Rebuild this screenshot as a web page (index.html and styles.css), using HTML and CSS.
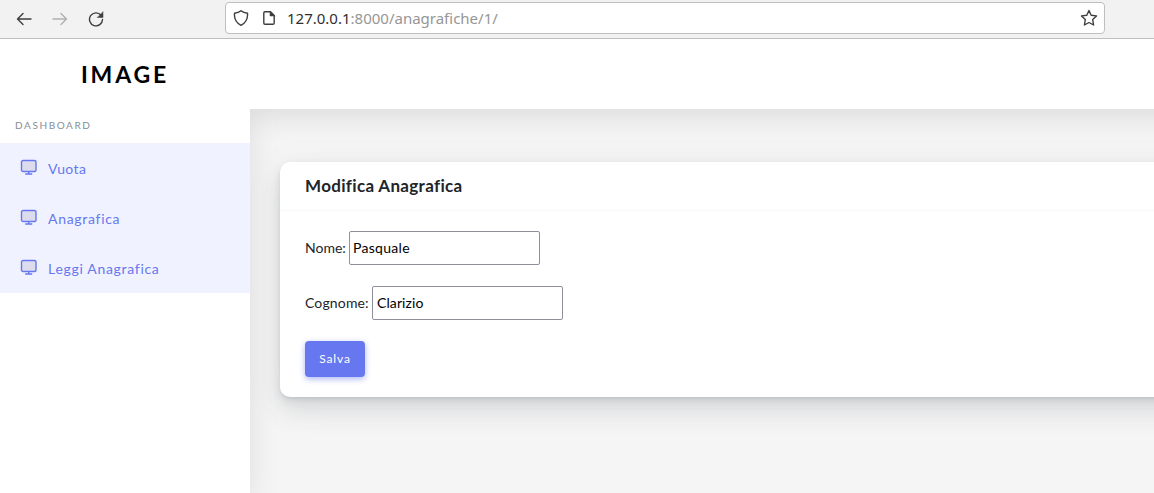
FILE: index.html
```html
<!DOCTYPE html>
<html lang="it">
<head>
<meta charset="utf-8">
<title>Modifica Anagrafica</title>
<link rel="stylesheet" href="styles.css">
</head>
<body>
<svg class="defs" width="0" height="0">
  <symbol id="monitor" viewBox="0 0 18 18">
    <rect x="1.5" y="1.5" width="14.500" height="11" rx="1.5" fill="#dcdcec" stroke="#6777ef" stroke-width="1.4"/>
    <path d="M8.750 12.500v2.500M5.200 15h7" fill="none" stroke="#6777ef" stroke-width="1.4"/>
  </symbol>
</svg>
<header class="browser">
  <div class="controls">
    <svg width="16" height="16" viewBox="0 0 16 16"><path d="M15 8H1.5M7 2.5L1.5 8L7 13.5"/></svg>
    <svg class="off" width="16" height="16" viewBox="0 0 16 16"><path d="M1 8h13.5M9 2.5L14.5 8L9 13.5"/></svg>
    <svg width="16" height="16" viewBox="0 0 16 16"><path d="M13 4.2A6.5 6.5 0 1 0 14.5 8.5"/><path class="solid" d="M15 1v5.5H9.5z"/></svg>
  </div>
  <div class="address">
    <svg width="16" height="18" viewBox="0 0 16 18"><path d="M8 1.7C6.2 3.2 4 3.9 1.5 4.2C1 9.500 3.500 14 8 16.300C12.500 14 15 9.500 14.500 4.200C12 3.900 9.800 3.200 8 1.700z"/></svg>
    <svg class="page" width="14" height="16" viewBox="0 0 14 16"><path d="M8.500 1.700H3A1.200 1.200 0 0 0 1.800 2.900V13A1.200 1.200 0 0 0 3 14.200H11A1.200 1.200 0 0 0 12.200 13V5.500z"/><path class="solid" d="M8 1.500V6h4.800z"/></svg>
    <span class="url"><b>127.0.0.1</b>:8000/anagrafiche/1/</span>
    <svg class="star" width="18" height="18" viewBox="0 0 18 18"><path d="M9 1.500L11.200 6.200L16.500 6.900L12.700 10.600L13.600 16L9 13.500L4.400 16L5.300 10.600L1.500 6.900L6.800 6.200z"/></svg>
  </div>
</header>
<div class="app">
  <aside class="sidebar">
    <div class="brand">IMAGE</div>
    <div class="section">DASHBOARD</div>
    <nav class="menu">
      <a class="item"><svg width="18" height="18"><use href="#monitor"/></svg><span class="short">Vuota</span></a>
      <a class="item"><svg width="18" height="18"><use href="#monitor"/></svg><span>Anagrafica</span></a>
      <a class="item"><svg width="18" height="18"><use href="#monitor"/></svg><span>Leggi Anagrafica</span></a>
    </nav>
  </aside>
  <main class="main">
    <div class="navbar"></div>
    <section class="card">
      <h4 class="title">Modifica Anagrafica</h4>
      <form class="form">
        <div class="field"><label for="nome">Nome:</label><input id="nome" value="Pasquale"></div>
        <div class="field"><label class="wide" for="cognome">Cognome:</label><input id="cognome" value="Clarizio"></div>
        <button class="save" type="button">Salva</button>
      </form>
    </section>
  </main>
</div>
</body>
</html>
```
FILE: styles.css
```css
* { box-sizing: border-box; }
body {
  margin: 0;
  height: 493px;
  overflow: hidden;
  display: flex;
  flex-direction: column;
  background: #f5f5f5;
  font: 14px/20px Lato, "Open Sans", sans-serif;
  color: #212529;
}
.defs { position: absolute; }
.browser {
  flex: none;
  height: 39px;
  display: flex;
  background: #f2f2f2;
  border-bottom: 1px solid #bebebe;
}
.browser svg { flex: none; fill: none; stroke: #3e3e3e; stroke-width: 1.4; stroke-linejoin: round; stroke-linecap: round; }
.browser .solid { fill: #3e3e3e; stroke-width: .5; }
.browser .off { stroke: #b0b0b0; }
.controls { width: 225px; padding: 11px 0 0 16px; display: flex; gap: 20px; }
.address {
  width: 880px;
  height: 32px;
  margin-top: 2px;
  padding: 0 6px 0 7px;
  display: flex;
  align-items: center;
  background: #fff;
  border: 1px solid #bfbfbf;
  border-radius: 4px;
}
.page { margin-left: 13px; }
.url { margin-left: 11px; font: 15px/20px "Noto Sans", sans-serif; color: #969696; }
.url b { font-weight: 400; color: #303030; }
.star { margin-left: auto; }
.app { flex: 1; display: flex; min-height: 0; }
.sidebar {
  position: relative;
  z-index: 1;
  flex: none;
  width: 250px;
  background: #fff;
  box-shadow: 0 8px 30px rgba(0, 0, 0, .1);
  clip-path: inset(0 -60px 0 0);
}
.brand {
  height: 70px;
  padding-left: 81px;
  font-size: 23px;
  font-weight: 700;
  line-height: 70px;
  letter-spacing: 2.8px;
  color: #000;
}
.section { height: 34px; padding-left: 15px; font-size: 10px; line-height: 32px; letter-spacing: 1.6px; color: #868e96; }
.item {
  height: 50px;
  padding-left: 20px;
  display: flex;
  align-items: center;
  gap: 10px;
  background: #f0f3ff;
  color: #6777ef;
  letter-spacing: .7px;
}
.item svg { margin-top: 0; }
.item span { margin-top: 1px; }
.item .short { letter-spacing: .4px; }
.main { flex: 1; min-width: 0; }
.navbar {
  position: relative;
  z-index: 2;
  width: 960px;
  height: 70px;
  background: #fff;
  box-shadow: 0 8px 30px rgba(0, 0, 0, .1);
  clip-path: inset(0 0 -60px 0);
}
.card {
  width: 960px;
  height: 235px;
  margin: 53px 0 0 30px;
  background: #fff;
  border-radius: 10px;
  box-shadow: 0 7px 35px rgba(90, 97, 105, .1), 0 15px 22px rgba(90, 97, 105, .1), 0 4px 8px rgba(90, 97, 105, .12), 0 2px 3px rgba(90, 97, 105, .1);
}
.title { height: 49px; margin: 0; padding-left: 25px; border-bottom: 1px solid #f9f9f9; font-size: 17px; line-height: 48px; letter-spacing: .33px; }
.form { padding: 20px 25px; }
.field { height: 34px; margin-bottom: 21px; display: flex; align-items: center; gap: 3px; }
.field label { width: 41px; }
.field .wide { width: 64px; letter-spacing: .15px; }
.field input {
  width: 191px;
  height: 34px;
  padding: 0 3px 2px;
  border: 1px solid #8f8f9d;
  border-radius: 2px;
  background: #fff;
  font: inherit;
  letter-spacing: .3px;
  color: #000;
}
#cognome { padding-left: 4px; letter-spacing: .1px; }
.save {
  display: block;
  width: 60px;
  height: 36px;
  padding: 0;
  border: 0;
  border-radius: 4px;
  background: #6777ef;
  box-shadow: 0 2px 6px #acb5f6;
  color: #fff;
  font: 12px/36px Lato, sans-serif;
  letter-spacing: .9px;
}
```
